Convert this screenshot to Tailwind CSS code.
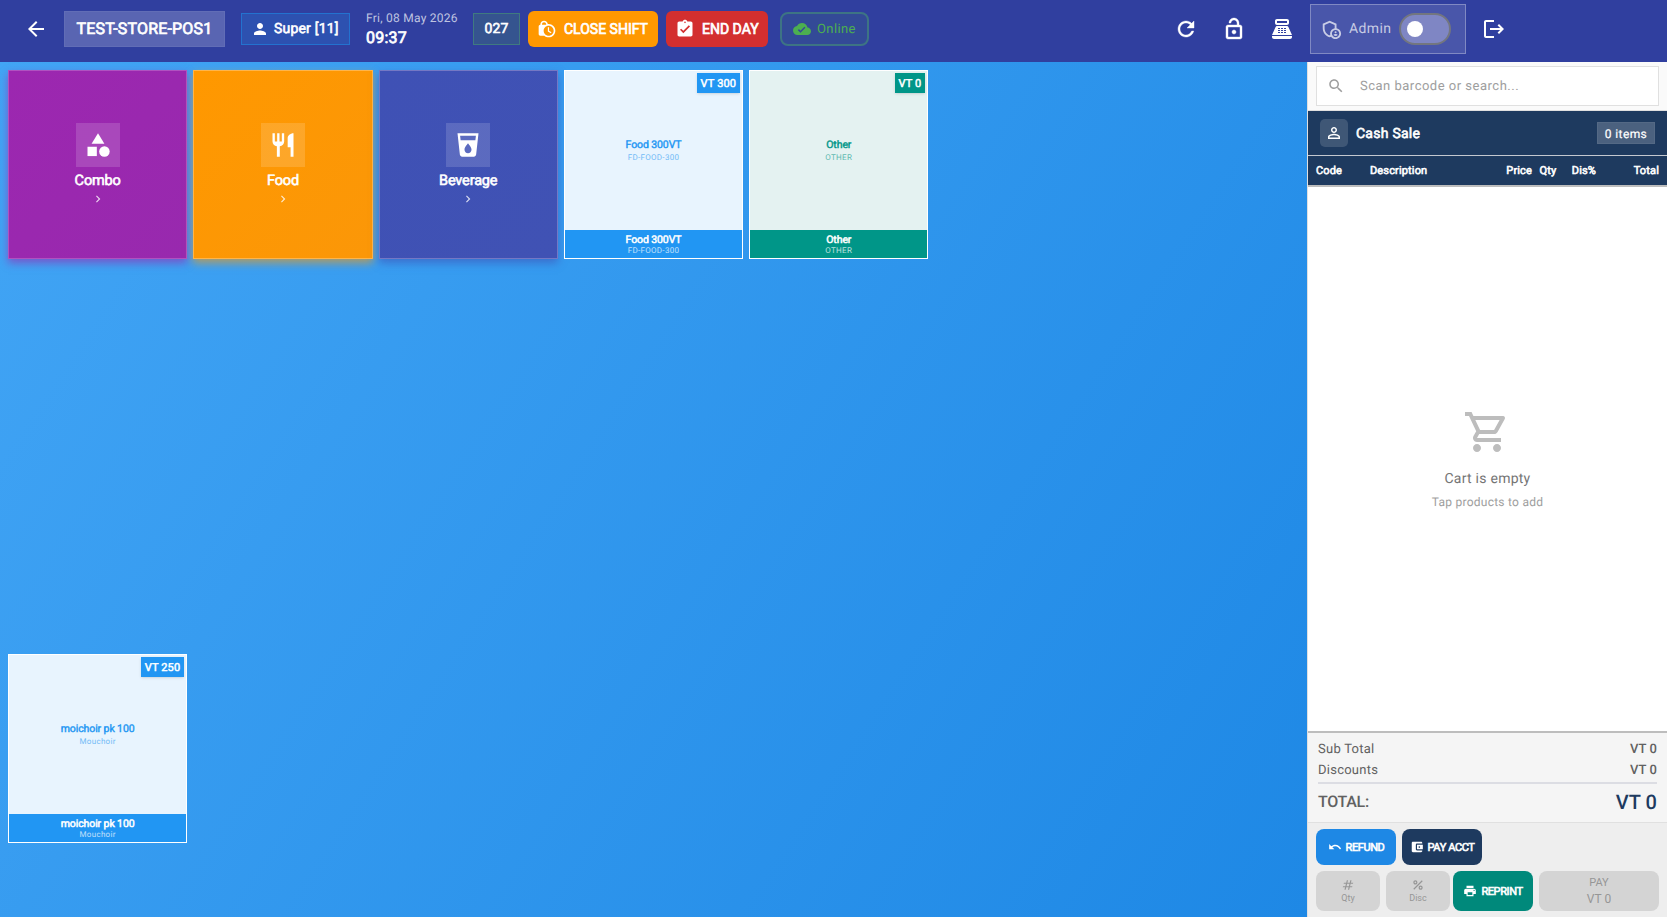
<!DOCTYPE html>
<html lang="en">
  <head>
    <meta charset="UTF-8" />
    <meta name="viewport" content="width=device-width, initial-scale=1.0" />
    <title>TEST-STORE-POS1</title>
    <script src="https://cdn.jsdelivr.net/npm/@tailwindcss/browser@4"></script>
  </head>
  <body class="flex h-screen flex-col overflow-hidden font-[Roboto,sans-serif] leading-none whitespace-nowrap [text-rendering:geometricPrecision]">
    <!-- top bar -->
    <header class="flex h-[62px] shrink-0 items-center bg-[#303f9f] pb-1 text-white">
      <button class="ml-6"><svg class="size-6 fill-current" viewBox="0 0 24 24"><path d="M20 11H7.83l5.59-5.59L12 4l-8 8 8 8 1.41-1.41L7.83 13H20v-2z" /></svg></button>
      <div class="ml-4 flex h-9 w-[161px] items-center justify-center border border-white/5 bg-white/20 text-[16px] tracking-[0.18px] [-webkit-text-stroke:0.7px]">TEST-STORE-POS1</div>
      <div class="ml-4 flex h-8 w-[109px] items-center border border-[#2372cf] bg-[#2d51b0] pl-[9px] text-[14px] tracking-[0.2px] [-webkit-text-stroke:0.6px]">
        <svg class="mr-[5px] size-[18px] fill-current" viewBox="0 0 24 24"><path d="M12 12c2.21 0 4-1.79 4-4s-1.79-4-4-4-4 1.79-4 4 1.79 4 4 4zm0 2c-2.67 0-8 1.34-8 4v2h16v-2c0-2.66-5.33-4-8-4z" /></svg>
        Super [11]
      </div>
      <div class="ml-4 w-[91px]">
        <div class="-mt-[2px] text-[12px] leading-[19px] tracking-[0.25px] text-white/70">Fri, 08 May 2026</div>
        <div class="text-[16px] leading-5 tracking-[0.2px] [-webkit-text-stroke:0.7px]">09:37</div>
      </div>
      <div class="ml-4 flex h-8 w-[47px] items-center justify-center border border-[#3f7a80] bg-[#35548f] text-[14px] tracking-[0.2px] [-webkit-text-stroke:0.6px]">027</div>
      <button class="ml-2 flex h-9 w-[130px] items-center rounded-md bg-[#ff9800] pl-[9px] text-[14px] [-webkit-text-stroke:0.7px]">
        <svg class="mr-[7px] size-5 fill-current" viewBox="0 0 24 24"><path d="M14.5 14.2l2.9 1.7-.8 1.3L13 15v-5h1.5v4.2zM22 14c0 4.41-3.59 8-8 8-2.02 0-3.86-.76-5.27-2H4c-1.15 0-2-.85-2-2V9c0-1.12.89-1.96 2-2v-.5C4 4.01 6.01 2 8.5 2c2.34 0 4.24 1.79 4.46 4.08.34-.05.69-.08 1.04-.08 4.41 0 8 3.59 8 8zM6 7h5v-.74C10.88 4.99 9.8 4 8.5 4 7.12 4 6 5.12 6 6.5V7zm14 7c0-3.31-2.69-6-6-6s-6 2.69-6 6 2.69 6 6 6 6-2.69 6-6z" /></svg>
        CLOSE SHIFT
      </button>
      <button class="ml-2 flex h-9 w-[102px] items-center rounded-md bg-[#d32f2f] pl-[9px] text-[14px] [-webkit-text-stroke:0.7px]">
        <svg class="mr-[7px] size-5 fill-current" viewBox="0 0 24 24"><path d="M19 3h-4.18C14.4 1.84 13.3 1 12 1c-1.3 0-2.4.84-2.82 2H5c-1.1 0-2 .9-2 2v14c0 1.1.9 2 2 2h14c1.1 0 2-.9 2-2V5c0-1.1-.9-2-2-2zm-7 0c.55 0 1 .45 1 1s-.45 1-1 1-1-.45-1-1 .45-1 1-1zm-2 14l-4-4 1.41-1.41L10 14.17l6.59-6.59L18 9l-8 8z" /></svg>
        END DAY
      </button>
      <div class="ml-3 flex h-[34px] w-[89px] items-center rounded-lg border-2 border-[#3d7484] bg-[#334a97] pl-[11px] text-[13px] tracking-[0.4px] text-[#4caf50]">
        <svg class="mr-[6px] size-[18px] fill-current" viewBox="0 0 24 24"><path d="M19.35 10.04C18.67 6.59 15.64 4 12 4 9.11 4 6.6 5.64 5.35 8.04 2.34 8.36 0 10.91 0 14c0 3.31 2.69 6 6 6h13c2.76 0 5-2.24 5-5 0-2.64-2.05-4.78-4.65-4.96zM10 17l-3.5-3.5 1.41-1.41L10 14.17 15.18 9l1.41 1.41L10 17z" /></svg>
        Online
      </div>
      <div class="ml-auto flex items-center gap-6">
        <svg class="size-6 fill-current stroke-current stroke-[0.4]" viewBox="0 0 24 24"><path d="M17.65 6.35C16.2 4.9 14.21 4 12 4c-4.42 0-7.99 3.58-7.99 8s3.57 8 7.99 8c3.73 0 6.84-2.55 7.73-6h-2.08c-.82 2.33-3.04 4-5.65 4-3.31 0-6-2.69-6-6s2.69-6 6-6c1.66 0 3.14.69 4.22 1.78L13 11h7V4l-2.35 2.35z" /></svg>
        <svg class="size-6 fill-current stroke-current stroke-[0.4]" viewBox="0 0 24 24"><path d="M12 17c1.1 0 2-.9 2-2s-.9-2-2-2-2 .9-2 2 .9 2 2 2zm6-9h-1V6c0-2.76-2.24-5-5-5S7 3.24 7 6h1.9c0-1.71 1.39-3.1 3.1-3.1 1.71 0 3.1 1.39 3.1 3.1v2H6c-1.1 0-2 .9-2 2v10c0 1.1.9 2 2 2h12c1.1 0 2-.9 2-2V10c0-1.1-.9-2-2-2zm0 12H6V10h12v10z" /></svg>
        <svg class="size-6 fill-current" viewBox="0 0 24 24"><path fill-rule="evenodd" d="M17 2H7c-1.1 0-2 .9-2 2v2c0 1.1.9 2 2 2h10c1.1 0 2-.9 2-2V4c0-1.1-.9-2-2-2zm0 4H7V4h10v2zM20 22H4c-1.1 0-2-.9-2-2v-1h20v1c0 1.1-.9 2-2 2zM18.53 10.19C18.21 9.47 17.49 9 16.7 9H7.3c-.79 0-1.51.47-1.83 1.19L2 18h20zM8 11h2v1H8zM11 11h2v1h-2zM14 11h2v1h-2zM8 13h2v1H8zM11 13h2v1h-2zM14 13h2v1h-2zM8 15h2v1H8zM11 15h2v1h-2zM14 15h2v1h-2z" /></svg>
      </div>
      <div class="ml-4 flex h-[50px] w-[156px] items-center border border-white/30 bg-white/12 pl-[9px] text-[14px] tracking-[0.4px] text-white/70">
        <svg class="mr-[7px] size-[22px] fill-current" viewBox="0 0 24 24"><circle cx="17" cy="15.5" r="1.12" /><path d="M17 17.5c-.73 0-2.19.36-2.24 1.08.5.71 1.32 1.17 2.24 1.17s1.74-.46 2.24-1.17c-.05-.72-1.51-1.08-2.24-1.08z" /><path fill-rule="evenodd" d="M18 11.09V6.27L10.5 3 3 6.27v4.91c0 4.54 3.2 8.79 7.5 9.82.55-.13 1.08-.32 1.6-.55C13.18 21.99 14.97 23 17 23c3.31 0 6-2.69 6-6 0-2.97-2.16-5.43-5-5.91zM11 17c0 .56.08 1.11.23 1.62-.24.11-.48.22-.73.3-3.17-1-5.5-4.24-5.5-7.74v-3.6l5.5-2.4 5.5 2.4v3.51c-2.84.48-5 2.94-5 5.91zm6 4c-2.21 0-4-1.79-4-4s1.79-4 4-4 4 1.79 4 4-1.79 4-4 4z" /></svg>
        <span class="w-[50px]">Admin</span>
        <span class="flex h-8 w-[52px] items-center rounded-full border-2 border-[#73767f] bg-[#7f86c4] pl-[6px]"><span class="size-4 rounded-full bg-white"></span></span>
      </div>
      <button class="mr-[161px] ml-4"><svg class="size-6 fill-current" viewBox="0 0 24 24"><path d="M17 7l-1.41 1.41L18.17 11H8v2h10.17l-2.58 2.58L17 17l5-5zM4 5h8V3H4c-1.1 0-2 .9-2 2v14c0 1.1.9 2 2 2h8v-2H4V5z" /></svg></button>
    </header>

    <div class="flex min-h-0 flex-1">
      <!-- product grid -->
      <main class="grid min-w-0 flex-1 auto-rows-[188.7px] grid-cols-7 content-start gap-[6px] bg-[linear-gradient(123.2deg,#42a5f5,#1e88e5)] p-2">
        <div class="flex flex-col items-center border border-[#b052c0] bg-[linear-gradient(135deg,#9c27b0,#9829ae)] pt-[52px] text-white shadow-[0_4px_8px_#9c27b099]">
          <div class="flex size-11 items-center justify-center bg-white/15"><svg class="size-7 fill-current" viewBox="0 0 24 24"><path d="M12 2l-5.5 9h11z" /><circle cx="17.5" cy="17.5" r="4.5" /><path d="M3 13.5h8v8H3z" /></svg></div>
          <div class="mt-[5px] text-[14.5px] leading-[17px] tracking-[-0.15px] [-webkit-text-stroke:0.6px]">Combo</div>
          <svg class="mt-[3px] size-[14px] fill-white/80" viewBox="0 0 24 24"><path d="M10 6L8.59 7.41 13.17 12l-4.58 4.59L10 18l6-6z" /></svg>
        </div>
        <div class="flex flex-col items-center border border-[#ffb54a] bg-[linear-gradient(135deg,#ff9800,#fb9708)] pt-[52px] text-white shadow-[0_4px_8px_#ff980099]">
          <div class="flex size-11 items-center justify-center bg-white/15"><svg class="size-7 fill-current" viewBox="0 0 24 24"><path d="M11 9H9V2H7v7H5V2H3v7c0 2.12 1.66 3.84 3.75 3.97V22h2.5v-9.03C11.34 12.84 13 11.12 13 9V2h-2v7zm5-3v8h2.5v8H21V2c-2.76 0-5 2.24-5 4z" /></svg></div>
          <div class="mt-[5px] text-[14.5px] leading-[17px] tracking-[-0.15px] [-webkit-text-stroke:0.6px]">Food</div>
          <svg class="mt-[3px] size-[14px] fill-white/80" viewBox="0 0 24 24"><path d="M10 6L8.59 7.41 13.17 12l-4.58 4.59L10 18l6-6z" /></svg>
        </div>
        <div class="flex flex-col items-center border border-[#7478c4] bg-[linear-gradient(135deg,#3f51b5,#4052b4)] pt-[52px] text-white shadow-[0_4px_8px_#3f51b599]">
          <div class="flex size-11 items-center justify-center bg-white/15"><svg class="size-7 fill-current" viewBox="0 0 24 24"><path d="M3 2l2.01 18.23C5.13 21.23 5.97 22 7 22h10c1.03 0 1.87-.77 1.99-1.77L21 2H3zm9 17c-1.66 0-3-1.34-3-3 0-2 3-5.4 3-5.4s3 3.4 3 5.4c0 1.66-1.34 3-3 3zm6.33-11H5.67l-.44-4h13.55l-.45 4z" /></svg></div>
          <div class="mt-[5px] text-[14.5px] leading-[17px] tracking-[-0.15px] [-webkit-text-stroke:0.6px]">Beverage</div>
          <svg class="mt-[3px] size-[14px] fill-white/80" viewBox="0 0 24 24"><path d="M10 6L8.59 7.41 13.17 12l-4.58 4.59L10 18l6-6z" /></svg>
        </div>
        <div class="relative flex flex-col border border-white bg-[#e8f4fe] text-center">
          <span class="absolute top-[2px] right-[2px] flex h-5 items-center bg-[#2196f3] px-1 text-[11px] tracking-[0.15px] text-white shadow [-webkit-text-stroke:0.5px]">VT 300</span>
          <div class="flex-1 pt-[67px] text-[#2196f3]">
            <div class="text-[10.5px] leading-[14px] tracking-[-0.1px] [-webkit-text-stroke:0.4px]">Food 300VT</div>
            <div class="mt-px text-[8px] leading-[10px] tracking-[0.3px] opacity-60">FD-FOOD-300</div>
          </div>
          <div class="h-7 bg-[#2196f3] pt-[3px] text-white">
            <div class="text-[10.5px] leading-[14px] tracking-[-0.1px] [-webkit-text-stroke:0.5px]">Food 300VT</div>
            <div class="text-[8px] leading-[8px] tracking-[0.3px] opacity-70">FD-FOOD-300</div>
          </div>
        </div>
        <div class="relative flex flex-col border border-white bg-[#e4f2f1] text-center">
          <span class="absolute top-[2px] right-[2px] flex h-5 items-center bg-[#009688] px-1 text-[11px] tracking-[0.15px] text-white shadow [-webkit-text-stroke:0.5px]">VT 0</span>
          <div class="flex-1 pt-[67px] text-[#009688]">
            <div class="text-[10.5px] leading-[14px] tracking-[-0.1px] [-webkit-text-stroke:0.4px]">Other</div>
            <div class="mt-px text-[8px] leading-[10px] tracking-[0.3px] opacity-60">OTHER</div>
          </div>
          <div class="h-7 bg-[#009688] pt-[3px] text-white">
            <div class="text-[10.5px] leading-[14px] tracking-[-0.1px] [-webkit-text-stroke:0.5px]">Other</div>
            <div class="text-[8px] leading-[8px] tracking-[0.3px] opacity-70">OTHER</div>
          </div>
        </div>
        <div class="relative col-start-1 row-start-4 flex flex-col border border-white bg-[#e8f4fe] text-center">
          <span class="absolute top-[2px] right-[2px] flex h-5 items-center bg-[#2196f3] px-1 text-[11px] tracking-[0.15px] text-white shadow [-webkit-text-stroke:0.5px]">VT 250</span>
          <div class="flex-1 pt-[67px] text-[#2196f3]">
            <div class="text-[10.5px] leading-[14px] tracking-[-0.1px] [-webkit-text-stroke:0.4px]">moichoir pk 100</div>
            <div class="mt-px text-[8px] leading-[10px] tracking-[0.3px] opacity-60">Mouchoir</div>
          </div>
          <div class="h-7 bg-[#2196f3] pt-[3px] text-white">
            <div class="text-[10.5px] leading-[14px] tracking-[-0.1px] [-webkit-text-stroke:0.5px]">moichoir pk 100</div>
            <div class="text-[8px] leading-[8px] tracking-[0.3px] opacity-70">Mouchoir</div>
          </div>
        </div>
      </main>

      <!-- cart -->
      <aside class="flex w-[360px] shrink-0 flex-col border-l border-[#e0e0e0] bg-white">
        <div class="h-[49px] border-b border-[#e0e0e0] bg-[#fafafa] px-2 pt-1">
          <div class="flex h-10 items-center border border-[#e0e0e0] bg-white pl-[10px] text-[13px] tracking-[0.5px] text-[#9e9e9e]">
            <svg class="mr-[15px] size-[18px] fill-current" viewBox="0 0 24 24"><path d="M15.5 14h-.79l-.28-.27C15.41 12.59 16 11.11 16 9.5 16 5.91 13.09 3 9.5 3S3 5.91 3 9.5 5.91 16 9.5 16c1.61 0 3.09-.59 4.23-1.57l.27.28v.79l5 4.99L20.49 19l-4.99-5zm-6 0C7.01 14 5 11.99 5 9.5S7.01 5 9.5 5 14 7.01 14 9.5 11.99 14 9.5 14z" /></svg>
            Scan barcode or search...
          </div>
        </div>
        <div class="flex h-[45px] items-center border-b border-[#c4c8d0] bg-[#1e3a5f] px-3 text-white">
          <span class="mr-2 flex size-7 items-center justify-center rounded-[5px] bg-white/15"><svg class="size-[18px] fill-current" viewBox="0 0 24 24"><path d="M12 5.9c1.16 0 2.1.94 2.1 2.1s-.94 2.1-2.1 2.1S9.9 9.16 9.9 8s.94-2.1 2.1-2.1m0 9c2.97 0 6.1 1.46 6.1 2.1v1.1H5.9V17c0-.64 3.13-2.1 6.1-2.1M12 4C9.79 4 8 5.79 8 8s1.79 4 4 4 4-1.79 4-4-1.79-4-4-4zm0 9c-2.67 0-8 1.34-8 4v3h16v-3c0-2.66-5.33-4-8-4z" /></svg></span>
          <span class="pt-px text-[14px] tracking-[0.25px] [-webkit-text-stroke:0.6px]">Cash Sale</span>
          <span class="ml-auto flex h-[22px] w-[58px] items-center justify-center border border-white/5 bg-white/20 pt-px text-[12px] tracking-[0.4px] [-webkit-text-stroke:0.2px]">0 items</span>
        </div>
        <div class="flex h-[31px] items-center border-b-2 border-[#bdbdbd] bg-[#1e3a5f] px-2 text-[11px] tracking-[0.15px] text-white [-webkit-text-stroke:0.6px]">
          <span class="w-[54px]">Code</span>
          <span class="flex-1">Description</span>
          <span class="w-10 text-right">Price</span>
          <span class="w-8 text-center">Qty</span>
          <span class="w-8 text-right">Dis%</span>
          <span class="w-[63px] text-right">Total</span>
        </div>
        <div class="flex flex-1 flex-col items-center bg-white pt-[221px]">
          <svg class="-ml-[2px] size-12 fill-[#bdbdbd]" viewBox="0 0 24 24"><path d="M15.55 13c.75 0 1.41-.41 1.75-1.03l3.58-6.49c.37-.66-.11-1.48-.87-1.48H5.21l-.94-2H1v2h2l3.6 7.59-1.35 2.44C4.52 15.37 5.48 17 7 17h12v-2H7l1.1-2h7.45zM6.16 6h12.15l-2.76 5H8.53L6.16 6zM7 18c-1.1 0-1.99.9-1.99 2S5.9 22 7 22s2-.9 2-2-.9-2-2-2zm10 0c-1.1 0-1.99.9-1.99 2s.89 2 1.99 2 2-.9 2-2-.9-2-2-2z" /></svg>
          <div class="mt-[13px] text-[14px] leading-5 tracking-[0.25px] text-[#757575]">Cart is empty</div>
          <div class="mt-1 text-[12px] leading-[18px] tracking-[0.25px] text-[#9e9e9e]">Tap products to add</div>
        </div>
        <div class="h-[92px] border-t-2 border-b border-t-[#bdbdbd] border-b-[#e0e0e0] bg-[#f5f5f5] px-[10px] pt-[6px] text-[#616161]">
          <div class="flex h-[21px] items-center justify-between text-[13px]"><span class="tracking-[0.25px]">Sub Total</span><span class="font-medium tracking-[0.1px]">VT 0</span></div>
          <div class="flex h-[21px] items-center justify-between text-[13px]"><span class="tracking-[0.25px]">Discounts</span><span class="font-medium tracking-[0.1px]">VT 0</span></div>
          <div class="mt-px flex h-[38px] items-center justify-between border-t-2 border-[#dcdde3]">
            <span class="text-[16px] font-medium tracking-[-0.3px]">TOTAL:</span>
            <span class="text-[20px] font-medium tracking-[0.1px] text-[#1e3a5f]">VT 0</span>
          </div>
        </div>
        <div class="h-[94px] bg-[#eeeeee] px-2 pt-[6px] text-[11px] tracking-[-0.4px] text-white">
          <div class="flex gap-[6px]">
            <button class="flex h-9 w-20 items-center justify-center rounded-lg bg-[#1e88e5] [-webkit-text-stroke:0.6px]"><svg class="mr-1 size-[14px] fill-current" viewBox="0 0 24 24"><path d="M12.5 8c-2.65 0-5.05.99-6.9 2.6L2 7v9h9l-3.62-3.62c1.39-1.16 3.16-1.88 5.12-1.88 3.54 0 6.55 2.31 7.6 5.5l2.37-.78C21.08 11.03 17.15 8 12.5 8z" /></svg>REFUND</button>
            <button class="flex h-9 w-20 items-center justify-center rounded-lg bg-[#1e3a5f] [-webkit-text-stroke:0.6px]"><svg class="mr-1 size-[14px] fill-current" viewBox="0 0 24 24"><path d="M21 18v1c0 1.1-.9 2-2 2H5c-1.11 0-2-.9-2-2V5c0-1.1.89-2 2-2h14c1.1 0 2 .9 2 2v1h-9c-1.11 0-2 .9-2 2v8c0 1.1.89 2 2 2h9zm-9-2h10V8H12v8zm4-2.5c-.83 0-1.5-.67-1.5-1.5s.67-1.5 1.5-1.5 1.5.67 1.5 1.5-.67 1.5-1.5 1.5z" /></svg>PAY ACCT</button>
          </div>
          <div class="mt-[6px] flex">
            <button class="flex h-10 w-16 flex-col items-center rounded-lg bg-[#d4d4d4] pt-[7px] text-[9px] tracking-normal text-[#969696]"><svg class="size-[14px] fill-current" viewBox="0 0 24 24"><path d="M20.5 10L21 8h-4l1-4h-2l-1 4h-4l1-4h-2L9 8H5l-.5 2h4l-1 4h-4L3 16h4l-1 4h2l1-4h4l-1 4h2l1-4h4l.5-2h-4l1-4h4zm-7 4h-4l1-4h4l-1 4z" /></svg><span class="mt-[2px]">Qty</span></button>
            <button class="ml-[6px] flex h-10 w-16 flex-col items-center rounded-lg bg-[#d4d4d4] pt-[7px] text-[9px] tracking-normal text-[#969696]"><svg class="size-[14px] fill-current" viewBox="0 0 24 24"><path d="M7.5 11C9.43 11 11 9.43 11 7.5S9.43 4 7.5 4 4 5.57 4 7.5 5.57 11 7.5 11zm0-5C8.33 6 9 6.67 9 7.5S8.33 9 7.5 9 6 8.33 6 7.5 6.67 6 7.5 6zM4 18.58L18.59 4 20 5.41 5.42 20zM16.5 13c-1.93 0-3.5 1.57-3.5 3.5s1.57 3.5 3.5 3.5 3.5-1.57 3.5-3.5-1.57-3.5-3.5-3.5zm0 5c-.83 0-1.5-.67-1.5-1.5s.67-1.5 1.5-1.5 1.5.67 1.5 1.5-.67 1.5-1.5 1.5z" /></svg><span class="mt-[2px]">Disc</span></button>
            <button class="ml-[3px] flex h-10 w-20 items-center justify-center rounded-lg bg-[#00897b] [-webkit-text-stroke:0.6px]"><svg class="mr-1 size-[14px] fill-current" viewBox="0 0 24 24"><path d="M19 8H5c-1.66 0-3 1.34-3 3v6h4v4h12v-4h4v-6c0-1.66-1.34-3-3-3zm-3 11H8v-5h8v5zm3-7c-.55 0-1-.45-1-1s.45-1 1-1 1 .45 1 1-.45 1-1 1zm-1-9H6v4h12V3z" /></svg>REPRINT</button>
            <button class="ml-[6px] flex h-10 w-[120px] flex-col items-center rounded-lg bg-[#d4d4d4] pt-1 tracking-normal text-[#969696]"><span class="text-[11px] leading-4">PAY</span><span class="text-[12px] leading-[17px]">VT 0</span></button>
          </div>
        </div>
      </aside>
    </div>
  </body>
</html>
